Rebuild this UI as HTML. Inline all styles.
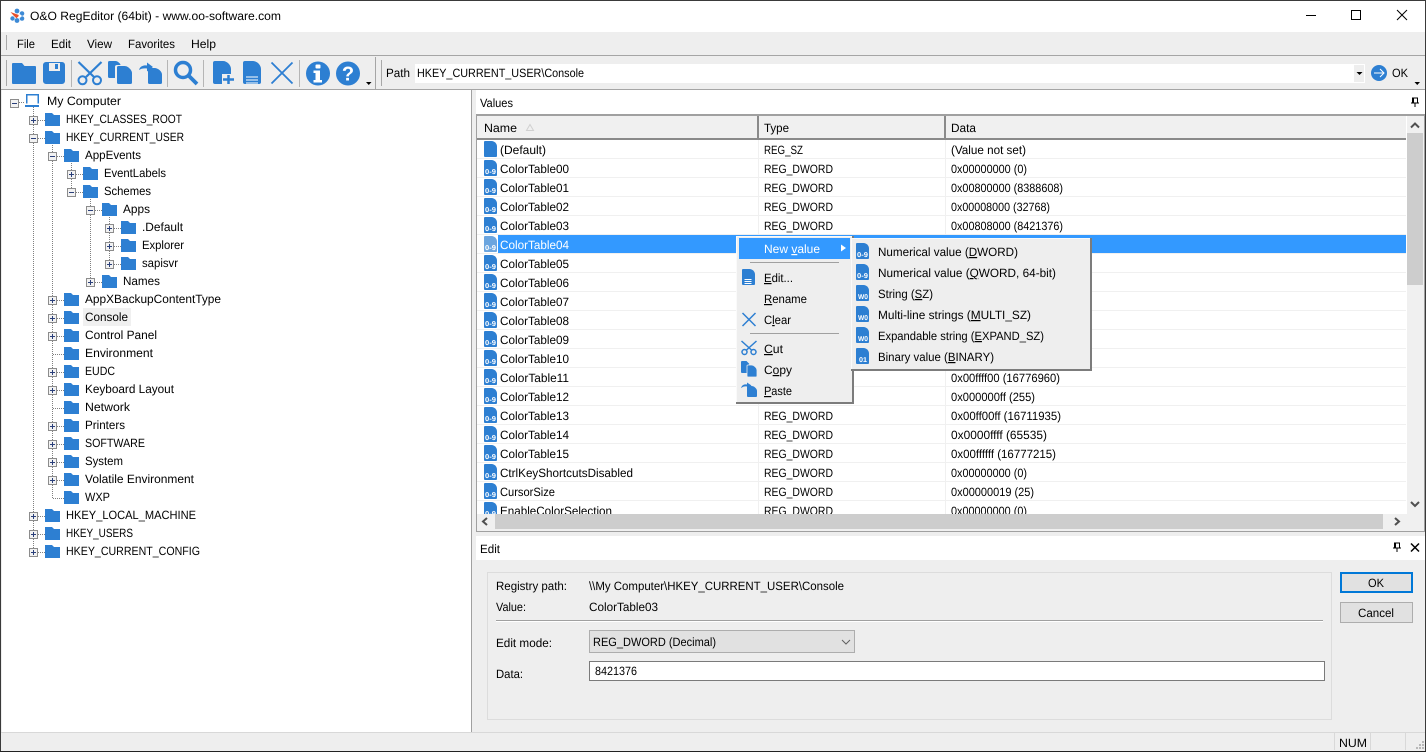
<!DOCTYPE html>
<html><head><meta charset="utf-8"><title>O&amp;O RegEditor</title>
<style>
html,body{margin:0;padding:0;width:1426px;height:752px;overflow:hidden;background:#eee}
svg{display:block}
text{font-family:"Liberation Sans",sans-serif;font-size:12px;fill:#000;text-rendering:geometricPrecision}
.u{text-decoration:underline}
.w{fill:#fff}
.c{shape-rendering:crispEdges}
</style></head><body>
<svg width="1426" height="752" viewBox="0 0 1426 752" xmlns="http://www.w3.org/2000/svg">
<defs>
<path id="fo" d="M0 0h7l2 2h6v11H0z" fill="#2d7fd2"/>
<g id="bp"><rect x=".5" y=".5" width="8" height="8" fill="#f2f2f2" stroke="#8c8c8c"/><rect x="2" y="4" width="5" height="1" fill="#2a3f7a"/><rect x="4" y="2" width="1" height="5" fill="#2a3f7a"/></g>
<g id="bm"><rect x=".5" y=".5" width="8" height="8" fill="#f2f2f2" stroke="#8c8c8c"/><rect x="2" y="4" width="5" height="1" fill="#2a3f7a"/></g>
<path id="d" d="M1 0h6.500c3 0 5.500 2.500 5.500 5.500v9.500a1 1 0 0 1-1 1H1a1 1 0 0 1-1-1V1a1 1 0 0 1 1-1z" fill="#2d7fd2"/>
<g id="d9"><use href="#d"/><text x="1" y="14" style="font-size:7px;font-weight:bold" class="w" textLength="11" lengthAdjust="spacingAndGlyphs">0-9</text></g>
<g id="dw"><use href="#d"/><text x="2" y="14" style="font-size:7px;font-weight:bold" class="w" textLength="10" lengthAdjust="spacingAndGlyphs">W0</text></g>
<g id="db"><use href="#d"/><text x="3" y="14" style="font-size:7px;font-weight:bold" class="w" textLength="8" lengthAdjust="spacingAndGlyphs">01</text></g>
</defs>

<!-- window base -->
<rect width="1426" height="752" fill="#eee"/>
<rect x="0" y="0" width="1426" height="32" fill="#fff"/>
<rect x="0" y="0" width="1426" height="1" fill="#3a3a3a"/>
<rect x="0" y="0" width="1" height="752" fill="#3a3a3a"/>
<rect x="1425" y="0" width="1" height="752" fill="#3a3a3a"/>
<rect x="0" y="751" width="1426" height="1" fill="#222"/>

<!-- title -->
<g fill="#3d8ad6">
<circle cx="17" cy="11" r="2.400"/><circle cx="22" cy="13.500" r="2.300"/><circle cx="22" cy="18.500" r="2.300"/><circle cx="17" cy="20.500" r="2.400"/><circle cx="12.500" cy="18.500" r="2.200"/>
</g>
<path d="M10.500 12l9 3.200-3 3-2.500-2.200z" fill="#e8502a"/>
<circle cx="20" cy="16" r="1.500" fill="#fff"/>
<text x="30" y="20" textLength="251" lengthAdjust="spacingAndGlyphs">O&amp;O RegEditor (64bit) - www.oo-software.com</text>
<rect x="1306" y="15" width="10" height="1" fill="#000"/>
<rect x="1351.500" y="10.500" width="9" height="9" fill="none" stroke="#000"/>
<path d="M1397 10l10 10M1407 10l-10 10" stroke="#000" stroke-width="1" fill="none"/>

<!-- menu band -->
<rect x="1" y="32" width="1424" height="23" fill="#eee"/>
<rect x="1" y="55" width="1424" height="1" fill="#a5a5a5"/>
<rect x="6" y="35" width="1" height="15" fill="#a8a8a8"/>
<text x="17" y="48" textLength="18" lengthAdjust="spacingAndGlyphs">File</text>
<text x="51" y="48" textLength="20" lengthAdjust="spacingAndGlyphs">Edit</text>
<text x="87" y="48" textLength="25" lengthAdjust="spacingAndGlyphs">View</text>
<text x="128" y="48" textLength="47" lengthAdjust="spacingAndGlyphs">Favorites</text>
<text x="191" y="48" textLength="25" lengthAdjust="spacingAndGlyphs">Help</text>

<!-- toolbar -->
<rect x="1" y="89" width="1424" height="1" fill="#a5a5a5"/>
<rect x="6" y="60" width="1" height="26" fill="#a8a8a8"/>
<rect x="71" y="60" width="1" height="27" fill="#b5b5b5"/>
<rect x="167" y="60" width="1" height="27" fill="#b5b5b5"/>
<rect x="203" y="60" width="1" height="27" fill="#b5b5b5"/>
<rect x="299" y="60" width="1" height="27" fill="#b5b5b5"/>
<rect x="375" y="57" width="1" height="32" fill="#a5a5a5"/>
<rect x="381" y="60" width="1" height="26" fill="#a8a8a8"/>
<g fill="#2d7fd2">
<path d="M12 64a1 1 0 0 1 1-1h9l2.500 3H35a1 1 0 0 1 1 1v16a1 1 0 0 1-1 1H13a1 1 0 0 1-1-1z"/>
<path fill-rule="evenodd" d="M46 62h16a3 3 0 0 1 3 3v16a3 3 0 0 1-3 3H46a3 3 0 0 1-3-3V65a3 3 0 0 1 3-3zM49 63v8h11v-8z"/>
<rect x="55" y="64" width="3" height="5"/>
<path d="M108 62.500a1.500 1.500 0 0 1 1.500-1.500h6c2 0 5 2.500 5 4H117a2 2 0 0 0-2 2v11h-5.500a1.500 1.500 0 0 1-1.500-1.500z"/>
<path d="M117 67.500a1.500 1.500 0 0 1 1.500-1.500h6c3.500 0 7.500 4 7.500 7v9.500a1.500 1.500 0 0 1-1.500 1.500h-12a1.500 1.500 0 0 1-1.500-1.500z"/>
<path d="M148 69.500a1.500 1.500 0 0 1 1.500-1.500h5c3.500 0 7.500 3.500 7.500 6.500v8a1.500 1.500 0 0 1-1.500 1.500h-11a1.500 1.500 0 0 1-1.500-1.500z"/>
<path d="M139 70c1-4 5-5 8-4.500V62.500l6 4.500-6 4.500V68.500c-3-.5-6 0-8 1.500z"/>
<path d="M213 63a2 2 0 0 1 2-2h8c4 0 8 4 8 8v13a2 2 0 0 1-2 2h-14a2 2 0 0 1-2-2z"/>
<path d="M243 63a2 2 0 0 1 2-2h8c4 0 8 4 8 8v13a2 2 0 0 1-2 2h-14a2 2 0 0 1-2-2z"/>
<circle cx="318" cy="73.500" r="12"/>
<circle cx="348" cy="73.500" r="12"/>
<circle cx="1379" cy="73" r="8"/>
</g>
<g fill="none" stroke="#2d7fd2">
<circle cx="82.500" cy="80.300" r="4" stroke-width="2"/>
<circle cx="97" cy="80.300" r="4" stroke-width="2"/>
<path d="M78.500 62l15.500 15M101.500 62L86 77" stroke-width="2.200"/>
<circle cx="183" cy="70" r="7.500" stroke-width="3.500"/>
<path d="M188.500 75.500l8.500 8.500" stroke-width="3.800"/>
<path d="M271.500 62.500l21 21M292.500 62.500l-21 21" stroke-width="1.800"/>
</g>
<rect x="222" y="74" width="13" height="11" fill="#eee"/>
<path d="M223 79.500h11M228.500 75v9" stroke="#2d7fd2" stroke-width="2.500" fill="none"/>
<path d="M246 77h12M246 80h12M246 83h12" stroke="#fff" stroke-width="1" fill="none"/>
<g fill="#fff"><rect x="315.500" y="64.500" width="5" height="4" rx="1"/><path d="M313.500 70.500h6.500v9.500h2v2.500h-8.500V80h2v-7h-2z"/></g>
<text x="348" y="80.500" text-anchor="middle" class="w" style="font-size:20px;font-weight:bold">?</text>
<path d="M366 82h5.500l-2.750 3z" fill="#000"/>
<text x="386" y="77" textLength="24" lengthAdjust="spacingAndGlyphs">Path</text>
<rect x="415" y="64" width="950" height="19" fill="#fff"/>
<rect x="1354" y="65" width="10" height="17" fill="#eee"/>
<path d="M1356.500 72h6l-3 3z" fill="#000"/>
<text x="417" y="77" textLength="167" lengthAdjust="spacingAndGlyphs">HKEY_CURRENT_USER\Console</text>
<path d="M1374 73h10M1380 69l4 4-4 4" stroke="#fff" stroke-width="1" fill="none"/>
<text x="1392" y="77" textLength="16" lengthAdjust="spacingAndGlyphs">OK</text>
<path d="M1414.500 82h5.500l-2.750 3z" fill="#000"/>

<!-- tree panel -->
<rect x="2" y="90" width="469" height="642" fill="#fff"/>
<rect x="471" y="90" width="1" height="642" fill="#a0a0a0"/>
<rect x="83" y="308" width="48" height="18" fill="#f0f0f0"/>
<g stroke="#808080" stroke-dasharray="1 1" fill="none" class="c">
<path d="M33.500 107V548M52.500 145V498M71.500 163V190M90.500 199V280M109.500 217V262"/>
<path d="M19 102.500h6M38 120.500h7M38 138.500h7M38 516.500h7M38 534.500h7M38 552.500h7"/>
<path d="M57 156.500h7M57 300.500h7M57 318.500h7M57 336.500h7M53 354.500h11M57 372.500h7M57 390.500h7M53 408.500h11M57 426.500h7M57 444.500h7M57 462.500h7M57 480.500h7M53 498.500h11"/>
<path d="M76 174.500h7M76 192.500h7M95 210.500h7M95 282.500h7M114 228.500h7M114 246.500h7M114 264.500h7"/>
</g>
<use href="#bm" x="10" y="99"/>
<path d="M26.750 103.500V94.750h11.500v8.750" fill="none" stroke="#2d7fd2" stroke-width="1.500"/>
<path d="M25 106h14" stroke="#2d7fd2" stroke-width="2"/>
<text x="47" y="105" textLength="74" lengthAdjust="spacingAndGlyphs">My Computer</text>

<use href="#bp" x="29" y="116"/><use href="#fo" x="45" y="113"/><text x="66" y="123" textLength="116" lengthAdjust="spacingAndGlyphs">HKEY_CLASSES_ROOT</text>
<use href="#bm" x="29" y="134"/><use href="#fo" x="45" y="131"/><text x="66" y="141" textLength="118" lengthAdjust="spacingAndGlyphs">HKEY_CURRENT_USER</text>
<use href="#bm" x="48" y="152"/><use href="#fo" x="64" y="149"/><text x="85" y="159" textLength="56" lengthAdjust="spacingAndGlyphs">AppEvents</text>
<use href="#bp" x="67" y="170"/><use href="#fo" x="83" y="167"/><text x="104" y="177" textLength="62" lengthAdjust="spacingAndGlyphs">EventLabels</text>
<use href="#bm" x="67" y="188"/><use href="#fo" x="83" y="185"/><text x="104" y="195" textLength="47" lengthAdjust="spacingAndGlyphs">Schemes</text>
<use href="#bm" x="86" y="206"/><use href="#fo" x="102" y="203"/><text x="123" y="213" textLength="27" lengthAdjust="spacingAndGlyphs">Apps</text>
<use href="#bp" x="105" y="224"/><use href="#fo" x="121" y="221"/><text x="142" y="231" textLength="41" lengthAdjust="spacingAndGlyphs">.Default</text>
<use href="#bp" x="105" y="242"/><use href="#fo" x="121" y="239"/><text x="142" y="249" textLength="42" lengthAdjust="spacingAndGlyphs">Explorer</text>
<use href="#bp" x="105" y="260"/><use href="#fo" x="121" y="257"/><text x="142" y="267" textLength="36" lengthAdjust="spacingAndGlyphs">sapisvr</text>
<use href="#bp" x="86" y="278"/><use href="#fo" x="102" y="275"/><text x="123" y="285" textLength="37" lengthAdjust="spacingAndGlyphs">Names</text>
<use href="#bp" x="48" y="296"/><use href="#fo" x="64" y="293"/><text x="85" y="303" textLength="136" lengthAdjust="spacingAndGlyphs">AppXBackupContentType</text>
<use href="#bp" x="48" y="314"/><use href="#fo" x="64" y="311"/><text x="85" y="321" textLength="43" lengthAdjust="spacingAndGlyphs">Console</text>
<use href="#bp" x="48" y="332"/><use href="#fo" x="64" y="329"/><text x="85" y="339" textLength="72" lengthAdjust="spacingAndGlyphs">Control Panel</text>
<use href="#fo" x="64" y="347"/><text x="85" y="357" textLength="68" lengthAdjust="spacingAndGlyphs">Environment</text>
<use href="#bp" x="48" y="368"/><use href="#fo" x="64" y="365"/><text x="85" y="375" textLength="30" lengthAdjust="spacingAndGlyphs">EUDC</text>
<use href="#bp" x="48" y="386"/><use href="#fo" x="64" y="383"/><text x="85" y="393" textLength="89" lengthAdjust="spacingAndGlyphs">Keyboard Layout</text>
<use href="#fo" x="64" y="401"/><text x="85" y="411" textLength="45" lengthAdjust="spacingAndGlyphs">Network</text>
<use href="#bp" x="48" y="422"/><use href="#fo" x="64" y="419"/><text x="85" y="429" textLength="40" lengthAdjust="spacingAndGlyphs">Printers</text>
<use href="#bp" x="48" y="440"/><use href="#fo" x="64" y="437"/><text x="85" y="447" textLength="60" lengthAdjust="spacingAndGlyphs">SOFTWARE</text>
<use href="#bp" x="48" y="458"/><use href="#fo" x="64" y="455"/><text x="85" y="465" textLength="38" lengthAdjust="spacingAndGlyphs">System</text>
<use href="#bp" x="48" y="476"/><use href="#fo" x="64" y="473"/><text x="85" y="483" textLength="109" lengthAdjust="spacingAndGlyphs">Volatile Environment</text>
<use href="#fo" x="64" y="491"/><text x="85" y="501" textLength="25" lengthAdjust="spacingAndGlyphs">WXP</text>
<use href="#bp" x="29" y="512"/><use href="#fo" x="45" y="509"/><text x="66" y="519" textLength="130" lengthAdjust="spacingAndGlyphs">HKEY_LOCAL_MACHINE</text>
<use href="#bp" x="29" y="530"/><use href="#fo" x="45" y="527"/><text x="66" y="537" textLength="67" lengthAdjust="spacingAndGlyphs">HKEY_USERS</text>
<use href="#bp" x="29" y="548"/><use href="#fo" x="45" y="545"/><text x="66" y="555" textLength="134" lengthAdjust="spacingAndGlyphs">HKEY_CURRENT_CONFIG</text>

<!-- Values panel -->
<rect x="476" y="90" width="949" height="24" fill="#fff"/>
<text x="480" y="107" textLength="33" lengthAdjust="spacingAndGlyphs">Values</text>
<path d="M1412.500 98h5v5h-5zM1411 103h8M1415 103v4M1413.500 98v5" fill="none" stroke="#000" stroke-width="1" class="c"/>
<rect x="476" y="114" width="949" height="418" fill="#a0a0a0"/>
<rect x="477" y="116" width="947" height="415" fill="#eee"/>
<rect x="477" y="116" width="929" height="24" fill="#f0f0f0"/>
<rect x="477" y="139" width="929" height="375" fill="#fff"/>
<rect x="477" y="138" width="930" height="2" fill="#8a8a8a"/>
<rect x="757" y="116" width="2" height="22" fill="#8a8a8a"/>
<rect x="944" y="116" width="2" height="22" fill="#8a8a8a"/>
<text x="484" y="132" textLength="33" lengthAdjust="spacingAndGlyphs">Name</text>
<text x="764" y="132" textLength="25" lengthAdjust="spacingAndGlyphs">Type</text>
<text x="951" y="132" textLength="25" lengthAdjust="spacingAndGlyphs">Data</text>
<path d="M526.500 130.500l3.500-6 3.500 6z" fill="none" stroke="#d0d0d0"/>
<g fill="#f0f0f0" class="c">
<rect x="477" y="158" width="929" height="1"/><rect x="477" y="177" width="929" height="1"/><rect x="477" y="196" width="929" height="1"/><rect x="477" y="215" width="929" height="1"/><rect x="477" y="234" width="929" height="1"/><rect x="477" y="253" width="929" height="1"/><rect x="477" y="272" width="929" height="1"/><rect x="477" y="291" width="929" height="1"/><rect x="477" y="310" width="929" height="1"/><rect x="477" y="329" width="929" height="1"/><rect x="477" y="348" width="929" height="1"/><rect x="477" y="367" width="929" height="1"/><rect x="477" y="386" width="929" height="1"/><rect x="477" y="405" width="929" height="1"/><rect x="477" y="424" width="929" height="1"/><rect x="477" y="443" width="929" height="1"/><rect x="477" y="462" width="929" height="1"/><rect x="477" y="481" width="929" height="1"/><rect x="477" y="500" width="929" height="1"/>
<rect x="758" y="140" width="1" height="374"/><rect x="945" y="140" width="1" height="374"/>
</g>
<rect x="498" y="235" width="908" height="18" fill="#3399ff"/>

<use href="#d" x="484" y="141"/><text x="500" y="154" textLength="46" lengthAdjust="spacingAndGlyphs">(Default)</text><text x="764" y="154" textLength="39" lengthAdjust="spacingAndGlyphs">REG_SZ</text><text x="951" y="154" textLength="75" lengthAdjust="spacingAndGlyphs">(Value not set)</text>
<use href="#d9" x="484" y="160"/><text x="500" y="173" textLength="69" lengthAdjust="spacingAndGlyphs">ColorTable00</text><text x="764" y="173" textLength="69" lengthAdjust="spacingAndGlyphs">REG_DWORD</text><text x="951" y="173" textLength="76" lengthAdjust="spacingAndGlyphs">0x00000000 (0)</text>
<use href="#d9" x="484" y="179"/><text x="500" y="192" textLength="69" lengthAdjust="spacingAndGlyphs">ColorTable01</text><text x="764" y="192" textLength="69" lengthAdjust="spacingAndGlyphs">REG_DWORD</text><text x="951" y="192" textLength="112" lengthAdjust="spacingAndGlyphs">0x00800000 (8388608)</text>
<use href="#d9" x="484" y="198"/><text x="500" y="211" textLength="69" lengthAdjust="spacingAndGlyphs">ColorTable02</text><text x="764" y="211" textLength="69" lengthAdjust="spacingAndGlyphs">REG_DWORD</text><text x="951" y="211" textLength="99" lengthAdjust="spacingAndGlyphs">0x00008000 (32768)</text>
<use href="#d9" x="484" y="217"/><text x="500" y="230" textLength="69" lengthAdjust="spacingAndGlyphs">ColorTable03</text><text x="764" y="230" textLength="69" lengthAdjust="spacingAndGlyphs">REG_DWORD</text><text x="951" y="230" textLength="112" lengthAdjust="spacingAndGlyphs">0x00808000 (8421376)</text>
<use href="#d9" x="484" y="236" opacity=".7"/><text x="500" y="249" class="w" textLength="69" lengthAdjust="spacingAndGlyphs">ColorTable04</text>
<use href="#d9" x="484" y="255"/><text x="500" y="268" textLength="69" lengthAdjust="spacingAndGlyphs">ColorTable05</text>
<use href="#d9" x="484" y="274"/><text x="500" y="287" textLength="69" lengthAdjust="spacingAndGlyphs">ColorTable06</text>
<use href="#d9" x="484" y="293"/><text x="500" y="306" textLength="69" lengthAdjust="spacingAndGlyphs">ColorTable07</text>
<use href="#d9" x="484" y="312"/><text x="500" y="325" textLength="69" lengthAdjust="spacingAndGlyphs">ColorTable08</text>
<use href="#d9" x="484" y="331"/><text x="500" y="344" textLength="69" lengthAdjust="spacingAndGlyphs">ColorTable09</text>
<use href="#d9" x="484" y="350"/><text x="500" y="363" textLength="69" lengthAdjust="spacingAndGlyphs">ColorTable10</text>
<use href="#d9" x="484" y="369"/><text x="500" y="382" textLength="69" lengthAdjust="spacingAndGlyphs">ColorTable11</text><text x="951" y="382" textLength="109" lengthAdjust="spacingAndGlyphs">0x00ffff00 (16776960)</text>
<use href="#d9" x="484" y="388"/><text x="500" y="401" textLength="69" lengthAdjust="spacingAndGlyphs">ColorTable12</text><text x="951" y="401" textLength="84" lengthAdjust="spacingAndGlyphs">0x000000ff (255)</text>
<use href="#d9" x="484" y="407"/><text x="500" y="420" textLength="69" lengthAdjust="spacingAndGlyphs">ColorTable13</text><text x="764" y="420" textLength="69" lengthAdjust="spacingAndGlyphs">REG_DWORD</text><text x="951" y="420" textLength="110" lengthAdjust="spacingAndGlyphs">0x00ff00ff (16711935)</text>
<use href="#d9" x="484" y="426"/><text x="500" y="439" textLength="69" lengthAdjust="spacingAndGlyphs">ColorTable14</text><text x="764" y="439" textLength="69" lengthAdjust="spacingAndGlyphs">REG_DWORD</text><text x="951" y="439" textLength="96" lengthAdjust="spacingAndGlyphs">0x0000ffff (65535)</text>
<use href="#d9" x="484" y="445"/><text x="500" y="458" textLength="69" lengthAdjust="spacingAndGlyphs">ColorTable15</text><text x="764" y="458" textLength="69" lengthAdjust="spacingAndGlyphs">REG_DWORD</text><text x="951" y="458" textLength="105" lengthAdjust="spacingAndGlyphs">0x00ffffff (16777215)</text>
<use href="#d9" x="484" y="464"/><text x="500" y="477" textLength="133" lengthAdjust="spacingAndGlyphs">CtrlKeyShortcutsDisabled</text><text x="764" y="477" textLength="69" lengthAdjust="spacingAndGlyphs">REG_DWORD</text><text x="951" y="477" textLength="76" lengthAdjust="spacingAndGlyphs">0x00000000 (0)</text>
<use href="#d9" x="484" y="483"/><text x="500" y="496" textLength="55" lengthAdjust="spacingAndGlyphs">CursorSize</text><text x="764" y="496" textLength="69" lengthAdjust="spacingAndGlyphs">REG_DWORD</text><text x="951" y="496" textLength="83" lengthAdjust="spacingAndGlyphs">0x00000019 (25)</text>
<use href="#d9" x="484" y="502"/><text x="500" y="515" textLength="112" lengthAdjust="spacingAndGlyphs">EnableColorSelection</text><text x="764" y="515" textLength="69" lengthAdjust="spacingAndGlyphs">REG_DWORD</text><text x="951" y="515" textLength="76" lengthAdjust="spacingAndGlyphs">0x00000000 (0)</text>

<!-- scrollbars -->
<rect x="477" y="514" width="947" height="17" fill="#f0f0f0"/>
<rect x="495" y="514" width="888" height="15" fill="#cdcdcd"/>
<path d="M487 518l-4 3.500 4 3.500M1395 518l4 3.500-4 3.500" fill="none" stroke="#505050" stroke-width="2"/>
<rect x="1407" y="116" width="17" height="415" fill="#f0f0f0"/>
<rect x="1406" y="116" width="1" height="398" fill="#fff"/>
<rect x="1407" y="133" width="16" height="152" fill="#cdcdcd"/>
<path d="M1411 127.500l4-4 4 4M1411 502l4 4 4-4" fill="none" stroke="#505050" stroke-width="2"/>

<!-- Edit panel -->
<rect x="476" y="536" width="949" height="24" fill="#fff"/>
<text x="480" y="553" textLength="20" lengthAdjust="spacingAndGlyphs">Edit</text>
<path d="M1394.500 543h5v5h-5zM1393 548h8M1397 548v4M1395.500 543v5" fill="none" stroke="#000" stroke-width="1" class="c"/>
<path d="M1411 543.500l8 8M1419 543.500l-8 8" stroke="#000" stroke-width="1.500" fill="none"/>
<rect x="487.500" y="572.500" width="844" height="147" fill="#eee" stroke="#dcdcdc"/>
<text x="496" y="590" textLength="71" lengthAdjust="spacingAndGlyphs">Registry path:</text>
<text x="589" y="590" textLength="255" lengthAdjust="spacingAndGlyphs">\\My Computer\HKEY_CURRENT_USER\Console</text>
<text x="496" y="611" textLength="30" lengthAdjust="spacingAndGlyphs">Value:</text>
<text x="589" y="611" textLength="69" lengthAdjust="spacingAndGlyphs">ColorTable03</text>
<rect x="496" y="620" width="827" height="1" fill="#a0a0a0"/>
<rect x="496" y="621" width="827" height="1" fill="#fff"/>
<text x="496" y="647" textLength="56" lengthAdjust="spacingAndGlyphs">Edit mode:</text>
<rect x="589.500" y="630.500" width="265" height="22" fill="#e1e1e1" stroke="#adadad"/>
<text x="593" y="646" textLength="123" lengthAdjust="spacingAndGlyphs">REG_DWORD (Decimal)</text>
<path d="M842 640l4 4 4-4" fill="none" stroke="#606060"/>
<text x="496" y="678" textLength="27" lengthAdjust="spacingAndGlyphs">Data:</text>
<rect x="589.500" y="661.500" width="735" height="19" fill="#fff" stroke="#7a7a7a"/>
<text x="595" y="675" textLength="42" lengthAdjust="spacingAndGlyphs">8421376</text>
<rect x="1341" y="573" width="71" height="19" fill="#e1e1e1" stroke="#0078d7" stroke-width="2"/>
<text x="1368" y="587" textLength="16" lengthAdjust="spacingAndGlyphs">OK</text>
<rect x="1340.500" y="602.500" width="72" height="20" fill="#e1e1e1" stroke="#adadad"/>
<text x="1358" y="617" textLength="36" lengthAdjust="spacingAndGlyphs">Cancel</text>

<!-- status bar -->
<rect x="1" y="732" width="1424" height="1" fill="#d8d8d8"/>
<rect x="1334" y="733" width="1" height="17" fill="#d8d8d8"/>
<rect x="1370" y="733" width="1" height="17" fill="#d8d8d8"/>
<rect x="1405" y="733" width="1" height="17" fill="#d8d8d8"/>
<text x="1339" y="747" textLength="28" lengthAdjust="spacingAndGlyphs">NUM</text>
<g fill="#b8b8b8"><rect x="1422" y="741" width="2" height="2"/><rect x="1419" y="744" width="2" height="2"/><rect x="1422" y="744" width="2" height="2"/><rect x="1416" y="747" width="2" height="2"/><rect x="1419" y="747" width="2" height="2"/><rect x="1422" y="747" width="2" height="2"/></g>

<!-- context menu -->
<rect x="736" y="236" width="117" height="167" fill="#eee"/>
<rect x="736" y="236" width="117" height="1" fill="#fafafa"/>
<rect x="736" y="236" width="1" height="167" fill="#fafafa"/>
<rect x="852" y="236" width="2" height="168" fill="#7c7c7c"/>
<rect x="736" y="402" width="118" height="2" fill="#7c7c7c"/>
<rect x="739" y="238" width="111" height="21" fill="#3399ff"/>
<text x="764" y="253" class="w" textLength="56" lengthAdjust="spacingAndGlyphs">New <tspan class="u">v</tspan>alue</text>
<path d="M841 244.500l5 3.500-5 3.500z" fill="#fff"/>
<rect x="750" y="262" width="89" height="1" fill="#a0a0a0"/>
<use href="#d" x="742" y="269"/>
<path d="M744.500 279.500h7M744.500 281.500h7M744.500 283.500h7" stroke="#fff" fill="none"/>
<text x="764" y="282" textLength="29" lengthAdjust="spacingAndGlyphs"><tspan class="u">E</tspan>dit...</text>
<text x="764" y="303" textLength="43" lengthAdjust="spacingAndGlyphs"><tspan class="u">R</tspan>ename</text>
<path d="M742.500 313l13 13M755.500 313l-13 13" stroke="#2d7fd2" stroke-width="1.500" fill="none"/>
<text x="764" y="324" textLength="27" lengthAdjust="spacingAndGlyphs">C<tspan class="u">l</tspan>ear</text>
<rect x="750" y="333" width="89" height="1" fill="#a0a0a0"/>
<g fill="none" stroke="#2d7fd2" stroke-width="1.500"><circle cx="744.500" cy="352" r="2.500"/><circle cx="753.500" cy="352" r="2.500"/><path d="M741.500 341l10 9M756.500 341l-10 9"/></g>
<text x="764" y="353" textLength="19" lengthAdjust="spacingAndGlyphs"><tspan class="u">C</tspan>ut</text>
<g fill="#2d7fd2">
<path d="M741 362a1 1 0 0 1 1-1h4.500l3 3-1.500 1v8h-6a1 1 0 0 1-1-1z"/>
<path d="M747 366a1 1 0 0 1 1-1h3.500c2.500 0 5.500 3 5.500 5v6a1 1 0 0 1-1 1h-8a1 1 0 0 1-1-1z" stroke="#eee" stroke-width=".8"/>
<path d="M747 387a1 1 0 0 1 1-1h3.500c2.500 0 5.500 2.500 5.500 5v5a1 1 0 0 1-1 1h-8a1 1 0 0 1-1-1z"/>
<path d="M741 388c1-3 3-4 6-3.500V382.500l4.500 3-4.500 3v-2c-2-.5-4 0-6 1.500z"/>
</g>
<text x="764" y="374" textLength="28" lengthAdjust="spacingAndGlyphs">C<tspan class="u">o</tspan>py</text>
<text x="764" y="395" textLength="28" lengthAdjust="spacingAndGlyphs"><tspan class="u">P</tspan>aste</text>

<!-- submenu -->
<rect x="851" y="238" width="240" height="132" fill="#eee"/>
<rect x="851" y="238" width="240" height="1" fill="#fafafa"/>
<rect x="851" y="238" width="1" height="132" fill="#fafafa"/>
<rect x="1090" y="238" width="2" height="133" fill="#7c7c7c"/>
<rect x="851" y="369" width="241" height="2" fill="#7c7c7c"/>
<use href="#d9" x="856" y="243"/><text x="878" y="256" textLength="140" lengthAdjust="spacingAndGlyphs">Numerical value (<tspan class="u">D</tspan>WORD)</text>
<use href="#d9" x="856" y="264"/><text x="878" y="277" textLength="178" lengthAdjust="spacingAndGlyphs">Numerical value (<tspan class="u">Q</tspan>WORD, 64-bit)</text>
<use href="#dw" x="856" y="285"/><text x="878" y="298" textLength="55" lengthAdjust="spacingAndGlyphs">String (<tspan class="u">S</tspan>Z)</text>
<use href="#dw" x="856" y="306"/><text x="878" y="319" textLength="153" lengthAdjust="spacingAndGlyphs">Multi-line strings (<tspan class="u">M</tspan>ULTI_SZ)</text>
<use href="#dw" x="856" y="327"/><text x="878" y="340" textLength="166" lengthAdjust="spacingAndGlyphs">Expandable string (<tspan class="u">E</tspan>XPAND_SZ)</text>
<use href="#db" x="856" y="348"/><text x="878" y="361" textLength="116" lengthAdjust="spacingAndGlyphs">Binary value (<tspan class="u">B</tspan>INARY)</text>
</svg>
</body></html>
